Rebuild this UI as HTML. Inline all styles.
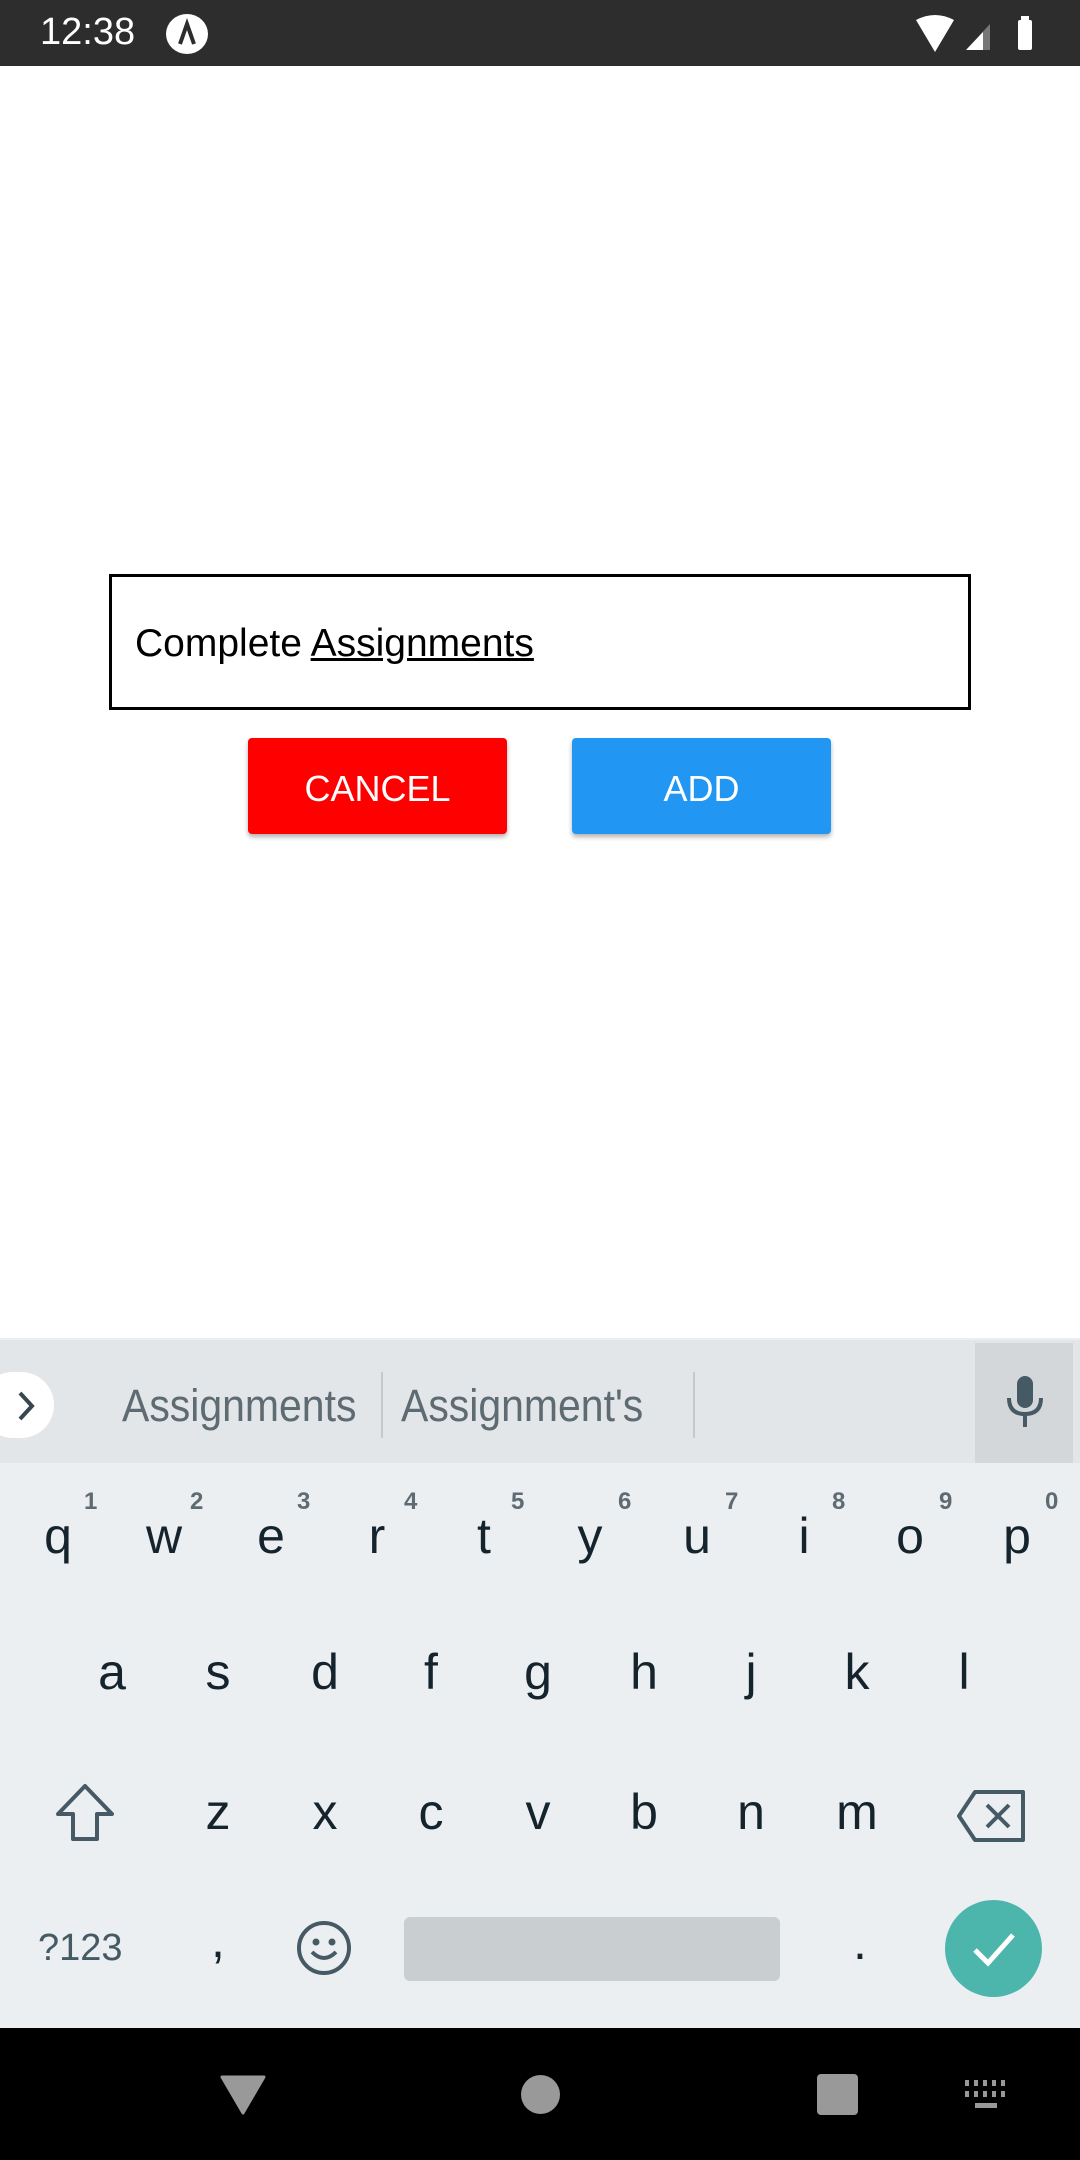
<!DOCTYPE html>
<html><head><meta charset="utf-8"><style>
*{margin:0;padding:0;box-sizing:border-box}
body{width:1080px;height:2160px;position:relative;background:#fff;font-family:"Liberation Sans",sans-serif;overflow:hidden}
.a{position:absolute}
.k{position:absolute;width:106px;text-align:center;font-size:50px;color:#15232d;line-height:60px}
.n{position:absolute;font-size:24px;color:#5f6b72;font-weight:bold}
</style></head><body>
<div class="a" style="left:0;top:0;width:1080px;height:66px;background:#2d2d2d"></div>
<div class="a" style="left:40px;top:11px;color:#fff;font-size:38px;line-height:42px">12:38</div>
<div class="a" style="left:166px;top:14px;width:42px;height:40px;border-radius:50%;background:#fff"></div>
<svg class="a" style="left:166px;top:14px" width="42" height="40"><path d="M14 30 L21 10 L28 30" stroke="#2d2d2d" stroke-width="4" fill="none"/></svg>
<svg class="a" style="left:910px;top:14px" width="150" height="40"><path d="M6 6 Q25 -4 44 6 L25 38 Z" fill="#fff"/><path d="M56 36 L80 10 L80 36 Z" fill="#777"/><path d="M56 36 L73 18 L73 36 Z" fill="#fff"/><rect x="108" y="6" width="14" height="30" rx="2" fill="#fff"/><rect x="111" y="2" width="8" height="5" fill="#fff"/></svg>

<div class="a" style="left:109px;top:574px;width:862px;height:136px;border:3px solid #000"></div>
<div class="a" style="left:135px;top:622px;font-size:39px;color:#000;line-height:44px">Complete <span style="text-decoration:underline">Assignments</span></div>

<div class="a" style="left:248px;top:738px;width:259px;height:96px;background:#ff0000;border-radius:4px;box-shadow:0 3px 5px rgba(0,0,0,.3);color:#fff;font-size:36px;text-align:center;line-height:102px">CANCEL</div>
<div class="a" style="left:572px;top:738px;width:259px;height:96px;background:#2196f3;border-radius:4px;box-shadow:0 3px 5px rgba(0,0,0,.3);color:#fff;font-size:36px;text-align:center;line-height:102px">ADD</div>

<div class="a" style="left:0;top:1338px;width:1080px;height:690px;background:#eceff1"></div>
<div class="a" style="left:0;top:1340px;width:1080px;height:123px;background:#e2e6e9"></div>
<div class="a" style="left:975px;top:1343px;width:98px;height:120px;background:#d3d7d9"></div>
<div class="a" style="left:-20px;top:1372px;width:74px;height:66px;border-radius:33px;background:#fff"></div>
<svg class="a" style="left:12px;top:1388px" width="30" height="36"><path d="M8 5 L20 18 L8 31" stroke="#37474f" stroke-width="4" fill="none"/></svg>
<div class="a" style="left:122px;top:1378px;font-size:45px;color:#5f6b72;line-height:56px;transform:scaleX(.91);transform-origin:left">Assignments</div>
<div class="a" style="left:381px;top:1372px;width:2px;height:66px;background:#c5cacd"></div>
<div class="a" style="left:401px;top:1378px;font-size:45px;color:#5f6b72;line-height:56px;transform:scaleX(.91);transform-origin:left">Assignment's</div>
<div class="a" style="left:693px;top:1372px;width:2px;height:66px;background:#c5cacd"></div>
<svg class="a" style="left:1004px;top:1376px" width="42" height="56"><rect x="13" y="0" width="16" height="32" rx="8" fill="#455a64"/><path d="M5 22 Q5 38 21 38 Q37 38 37 22" stroke="#455a64" stroke-width="4" fill="none"/><rect x="19" y="37" width="4" height="14" fill="#455a64"/></svg>

<div class="k" style="left:5px;top:1506px">q</div><div class="n" style="left:84px;top:1488px">1</div>
<div class="k" style="left:111px;top:1506px">w</div><div class="n" style="left:190px;top:1488px">2</div>
<div class="k" style="left:218px;top:1506px">e</div><div class="n" style="left:297px;top:1488px">3</div>
<div class="k" style="left:324px;top:1506px">r</div><div class="n" style="left:404px;top:1488px">4</div>
<div class="k" style="left:431px;top:1506px">t</div><div class="n" style="left:511px;top:1488px">5</div>
<div class="k" style="left:537px;top:1506px">y</div><div class="n" style="left:618px;top:1488px">6</div>
<div class="k" style="left:644px;top:1506px">u</div><div class="n" style="left:725px;top:1488px">7</div>
<div class="k" style="left:751px;top:1506px">i</div><div class="n" style="left:832px;top:1488px">8</div>
<div class="k" style="left:857px;top:1506px">o</div><div class="n" style="left:939px;top:1488px">9</div>
<div class="k" style="left:964px;top:1506px">p</div><div class="n" style="left:1045px;top:1488px">0</div>

<div class="k" style="left:59px;top:1642px">a</div>
<div class="k" style="left:165px;top:1642px">s</div>
<div class="k" style="left:272px;top:1642px">d</div>
<div class="k" style="left:378px;top:1642px">f</div>
<div class="k" style="left:485px;top:1642px">g</div>
<div class="k" style="left:591px;top:1642px">h</div>
<div class="k" style="left:698px;top:1642px">j</div>
<div class="k" style="left:804px;top:1642px">k</div>
<div class="k" style="left:911px;top:1642px">l</div>

<svg class="a" style="left:52px;top:1782px" width="66" height="62"><path d="M33 4 L60 32 L45 32 L45 57 L21 57 L21 32 L6 32 Z" stroke="#455a64" stroke-width="4" fill="none" stroke-linejoin="round"/></svg>
<div class="k" style="left:165px;top:1782px">z</div>
<div class="k" style="left:272px;top:1782px">x</div>
<div class="k" style="left:378px;top:1782px">c</div>
<div class="k" style="left:485px;top:1782px">v</div>
<div class="k" style="left:591px;top:1782px">b</div>
<div class="k" style="left:698px;top:1782px">n</div>
<div class="k" style="left:804px;top:1782px">m</div>
<svg class="a" style="left:955px;top:1788px" width="74" height="56"><path d="M20 4 L68 4 L68 52 L20 52 L4 28 Z" stroke="#455a64" stroke-width="4" fill="none" stroke-linejoin="round"/><path d="M32 17 L54 39 M54 17 L32 39" stroke="#455a64" stroke-width="4"/></svg>

<div class="a" style="left:38px;top:1924px;font-size:38px;color:#455a64;line-height:48px">?123</div>
<div class="k" style="left:165px;top:1910px">,</div>
<svg class="a" style="left:296px;top:1920px" width="56" height="56"><circle cx="28" cy="28" r="25" stroke="#455a64" stroke-width="4" fill="none"/><circle cx="20" cy="22" r="3.5" fill="#455a64"/><circle cx="36" cy="22" r="3.5" fill="#455a64"/><path d="M16 32 Q28 44 40 32" stroke="#455a64" stroke-width="4" fill="none"/></svg>
<div class="a" style="left:404px;top:1917px;width:376px;height:64px;background:#c9ced1;border-radius:6px"></div>
<div class="k" style="left:807px;top:1912px">.</div>
<div class="a" style="left:945px;top:1900px;width:97px;height:97px;border-radius:50%;background:#4db6ac"></div>
<svg class="a" style="left:965px;top:1920px" width="58" height="58"><path d="M10 30 L23 43 L48 15" stroke="#fff" stroke-width="5" fill="none"/></svg>

<div class="a" style="left:0;top:2028px;width:1080px;height:132px;background:#000"></div>
<svg class="a" style="left:220px;top:2075px" width="46" height="40"><path d="M2 2 L44 2 L23 38 Z" fill="#999" stroke="#999" stroke-width="3" stroke-linejoin="round"/></svg>
<div class="a" style="left:521px;top:2075px;width:39px;height:39px;border-radius:50%;background:#999"></div>
<div class="a" style="left:817px;top:2074px;width:41px;height:41px;border-radius:4px;background:#999"></div>
<svg class="a" style="left:965px;top:2080px" width="44" height="36"><g fill="#999"><rect x="0" y="0" width="4" height="6"/><rect x="9" y="0" width="4" height="6"/><rect x="18" y="0" width="4" height="6"/><rect x="27" y="0" width="4" height="6"/><rect x="36" y="0" width="4" height="6"/><rect x="0" y="11" width="4" height="6"/><rect x="9" y="11" width="4" height="6"/><rect x="18" y="11" width="4" height="6"/><rect x="27" y="11" width="4" height="6"/><rect x="36" y="11" width="4" height="6"/><rect x="10" y="23" width="22" height="5"/></g></svg>
</body></html>
